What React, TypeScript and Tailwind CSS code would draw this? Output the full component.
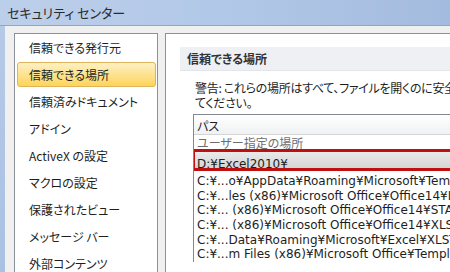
import React from 'react';

const jp = "font-['Noto_Sans_CJK_JP',sans-serif] [font-feature-settings:'palt']";

const navItems = [
  '信頼できる発行元',
  '信頼できる場所',
  '信頼済みドキュメント',
  'アドイン',
  'ActiveX の設定',
  'マクロの設定',
  '保護されたビュー',
  'メッセージ バー',
  '外部コンテンツ',
];

const paths = [
  'C:¥...o¥AppData¥Roaming¥Microsoft¥Templates¥',
  'C:¥...les (x86)¥Microsoft Office¥Office14¥Library¥',
  'C:¥... (x86)¥Microsoft Office¥Office14¥STARTUP¥',
  'C:¥... (x86)¥Microsoft Office¥Office14¥XLSTART¥',
  'C:¥...Data¥Roaming¥Microsoft¥Excel¥XLSTART¥',
  'C:¥...m Files (x86)¥Microsoft Office¥Templates¥',
];

export default function App() {
  return (
    <div className={`w-[450px] h-[272px] overflow-hidden relative bg-[#f0f0f0] text-[#1e1e1e] ${jp}`}>
      {/* Title bar */}
      <div className="h-[26px] flex items-center pl-[7px] bg-gradient-to-r from-[#bccfea] via-[#b2c8e8] to-[#a3bbde] border-b border-[#8da6c9]">
        <span className="text-[13px] text-[#2a2a2a] leading-none">セキュリティ センター</span>
      </div>

      <div className="flex h-full">
        <div className="w-[5px] bg-gradient-to-b from-[#b6cae7] to-[#a9c0e2] shrink-0" />
        <div className="flex-1 flex gap-[7px] pl-[9px] pt-[7px]">
          {/* Left navigation */}
          <div className="w-[144px] shrink-0 bg-white border border-[#8e9298] flex flex-col">
            {navItems.map((item, i) => (
              <div key={item} className="h-[27px] py-[1px] pl-[2px] pr-[1px] flex">
                <div
                  className={`flex-1 flex items-center pl-[11px] text-[12px] rounded-[3px] border ${
                    i === 1
                      ? 'border-[#ddb35c] bg-gradient-to-b from-[#fdf0c4] via-[#fde38f] to-[#ffd357]'
                      : 'border-transparent'
                  }`}
                >
                  {item}
                </div>
              </div>
            ))}
          </div>

          {/* Right content */}
          <div className="flex-1 min-w-0 bg-white border-l border-t border-[#8e9298] pl-[14px] pt-[13px]">
            <div className="h-[24px] bg-[#eef0f4] border-b border-[#e2e5eb] flex items-center pl-[7px]">
              <span className="text-[12px] font-bold text-[#333]">信頼できる場所</span>
            </div>
            <div className="pl-[15px] pt-[10px] text-[12px] leading-[14px] whitespace-nowrap overflow-hidden tracking-[-0.3px]">
              <div>警告: これらの場所はすべて、ファイルを開くのに安全な場所として扱われます。</div>
              <div className="mt-[1px]">てください。</div>
            </div>
            <div className="ml-[13px] mt-[4px] border-l border-t border-[#828790] whitespace-nowrap overflow-hidden">
              <div className="h-[20px] flex items-center pt-[2px] pl-[3px] text-[12px] bg-gradient-to-b from-white to-[#f0f1f3] border-b border-[#d5d5d5]">
                パス
              </div>
              <div className="h-[14px] flex items-end pl-[3px] text-[12px] leading-[14px] text-[#6d6d6d] overflow-hidden">
                <span className="translate-y-[1px]">ユーザー指定の場所</span>
              </div>
              <div className="relative h-[25px]">
                <div className="absolute inset-x-0 top-[2px] h-[20px] bg-gradient-to-b from-[#ececec] to-[#d0d0d0] flex items-center pt-[6px] pl-[3px] font-['DejaVu_Sans',sans-serif] text-[12px]">
                  D:¥Excel2010¥
                </div>
                <div className="absolute left-[-2px] right-[2px] top-0 h-[22px] border-[3px] border-[#bf1010]" />
              </div>
              <div className="font-['DejaVu_Sans',sans-serif] text-[12px]">
                {paths.map((p) => (
                  <div key={p} className="h-[14.6px] flex items-center pl-[3px]">
                    {p}
                  </div>
                ))}
              </div>
            </div>
          </div>
        </div>
      </div>
    </div>
  );
}
